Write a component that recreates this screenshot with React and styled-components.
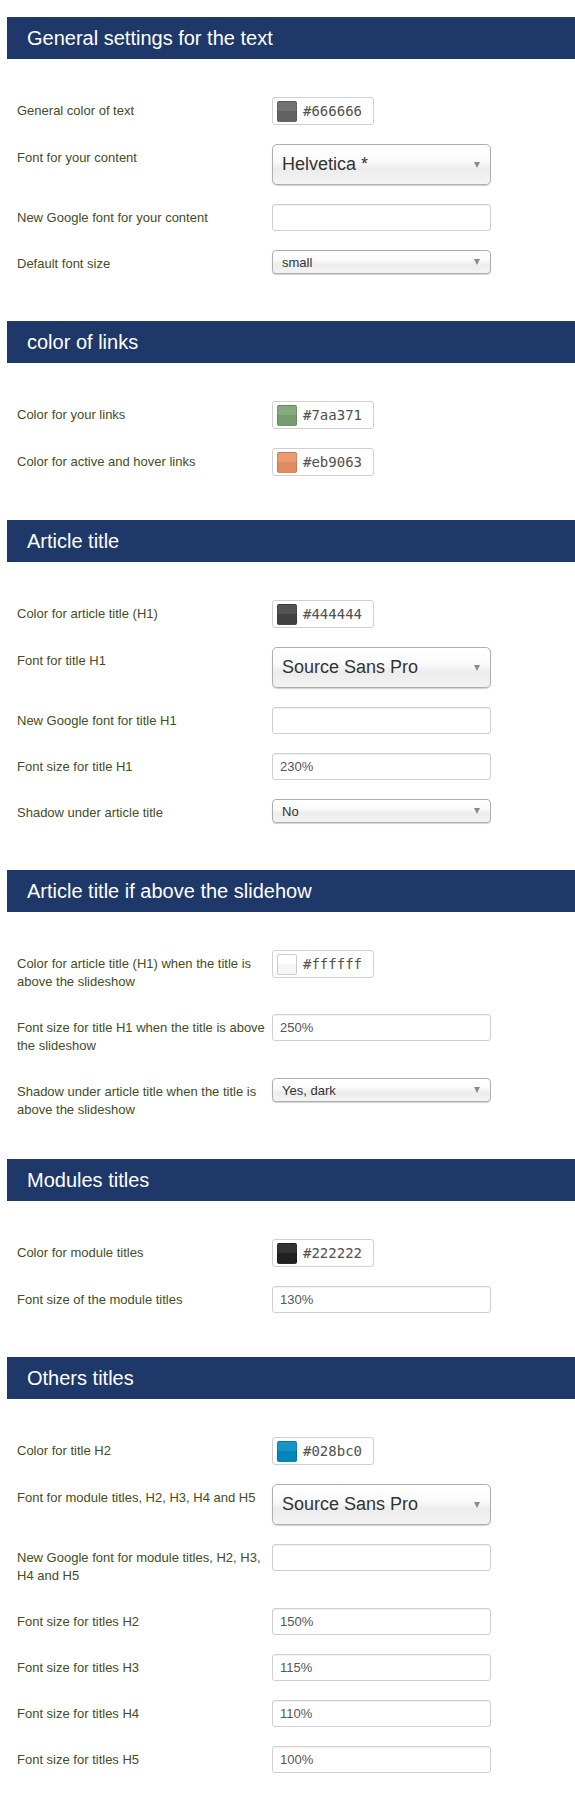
import styled, { createGlobalStyle } from 'styled-components';

const sections = [
  {
    title: 'General settings for the text',
    fields: [
      { label: 'General color of text', type: 'color', value: '#666666' },
      { label: 'Font for your content', type: 'font', value: 'Helvetica *' },
      { label: 'New Google font for your content', type: 'text', value: '' },
      { label: 'Default font size', type: 'select', value: 'small' },
    ],
  },
  {
    title: 'color of links',
    fields: [
      { label: 'Color for your links', type: 'color', value: '#7aa371' },
      { label: 'Color for active and hover links', type: 'color', value: '#eb9063' },
    ],
  },
  {
    title: 'Article title',
    fields: [
      { label: 'Color for article title (H1)', type: 'color', value: '#444444' },
      { label: 'Font for title H1', type: 'font', value: 'Source Sans Pro' },
      { label: 'New Google font for title H1', type: 'text', value: '' },
      { label: 'Font size for title H1', type: 'text', value: '230%' },
      { label: 'Shadow under article title', type: 'select', value: 'No' },
    ],
  },
  {
    title: 'Article title if above the slidehow',
    tight: true,
    fields: [
      {
        label: 'Color for article title (H1) when the title is above the slideshow',
        type: 'color',
        value: '#ffffff',
      },
      {
        label: 'Font size for title H1 when the title is above the slideshow',
        type: 'text',
        value: '250%',
      },
      {
        label: 'Shadow under article title when the title is above the slideshow',
        type: 'select',
        value: 'Yes, dark',
      },
    ],
  },
  {
    title: 'Modules titles',
    fields: [
      { label: 'Color for module titles', type: 'color', value: '#222222' },
      { label: 'Font size of the module titles', type: 'text', value: '130%' },
    ],
  },
  {
    title: 'Others titles',
    fields: [
      { label: 'Color for title H2', type: 'color', value: '#028bc0' },
      { label: 'Font for module titles, H2, H3, H4 and H5', type: 'font', value: 'Source Sans Pro' },
      { label: 'New Google font for module titles, H2, H3, H4 and H5', type: 'text', value: '' },
      { label: 'Font size for titles H2', type: 'text', value: '150%' },
      { label: 'Font size for titles H3', type: 'text', value: '115%' },
      { label: 'Font size for titles H4', type: 'text', value: '110%' },
      { label: 'Font size for titles H5', type: 'text', value: '100%' },
    ],
  },
];

export default function App() {
  return (
    <>
      <GlobalStyle />
      <Page>
        {sections.map((section) => (
          <section key={section.title}>
            <Header>{section.title}</Header>
            <Fields $tight={section.tight}>
              {section.fields.map((field) => (
                <Row key={field.label}>
                  <Label>{field.label}</Label>
                  {renderControl(field)}
                </Row>
              ))}
            </Fields>
          </section>
        ))}
      </Page>
    </>
  );

  function renderControl(field) {
    if (field.type === 'color') {
      return (
        <ColorBox>
          <Swatch $color={field.value} />
          <HexText>{field.value}</HexText>
        </ColorBox>
      );
    }
    if (field.type === 'font' || field.type === 'select') {
      const large = field.type === 'font';
      return (
        <Select $large={large}>
          <span>{field.value}</span>
          <Caret />
        </Select>
      );
    }
    return <TextInput type="text" defaultValue={field.value} readOnly />;
  }
}

const GlobalStyle = createGlobalStyle`
  html, body {
    margin: 0;
    padding: 0;
    background: #ffffff;
  }
  body {
    font-family: "Liberation Sans", Helvetica, Arial, sans-serif;
  }
`;

const Page = styled.div`
  padding: 17px 0 0 7px;
`;

const Header = styled.h2`
  margin: 0;
  height: 42px;
  display: flex;
  align-items: center;
  padding-left: 20px;
  background-color: #1d3869;
  color: #ffffff;
  font-size: 20px;
  font-weight: normal;
`;

const Fields = styled.div`
  padding: 38px 0 ${(p) => (p.$tight ? '17px' : '25px')} 10px;
`;

const Row = styled.div`
  display: flex;
  align-items: flex-start;
  margin-bottom: 19px;
`;

const Label = styled.label`
  width: 255px;
  flex-shrink: 0;
  padding: 5px 0 4px;
  font-size: 13px;
  line-height: 18px;
  color: #434d26;
`;

const ColorBox = styled.div`
  box-sizing: border-box;
  width: 102px;
  height: 28px;
  display: flex;
  align-items: center;
  padding: 0 4px;
  border: 1px solid #d0d0d0;
  border-radius: 3px;
  background: #ffffff;
`;

const Swatch = styled.span`
  width: 20px;
  height: 21px;
  border-radius: 2px;
  box-sizing: border-box;
  border: 1px solid ${(p) => (p.$color === '#ffffff' ? '#cccccc' : 'rgba(0, 0, 0, 0.12)')};
  background: linear-gradient(
      to bottom,
      rgba(255, 255, 255, 0.08) 0%,
      rgba(255, 255, 255, 0.08) 45%,
      rgba(0, 0, 0, 0.04) 50%,
      rgba(0, 0, 0, 0.04) 100%
    ),
    ${(p) => p.$color};
`;

const HexText = styled.span`
  margin-left: 6px;
  font-family: "DejaVu Sans Mono", "Liberation Mono", monospace;
  font-size: 14px;
  color: #505050;
`;

const Select = styled.div`
  box-sizing: border-box;
  width: 219px;
  height: ${(p) => (p.$large ? '41px' : '24px')};
  display: flex;
  align-items: center;
  justify-content: space-between;
  padding: 0 10px 0 9px;
  border: 1px solid #aeaeae;
  border-radius: ${(p) => (p.$large ? '5px' : '4px')};
  background: linear-gradient(
    to bottom,
    #ffffff 0%,
    #fbfbfb 40%,
    #ececec 62%,
    #f3f3f3 100%
  );
  box-shadow: 0 1px 1px rgba(0, 0, 0, 0.18);
  font-size: ${(p) => (p.$large ? '18px' : '13px')};
  color: #333333;
`;

const Caret = styled.span`
  width: 0;
  height: 0;
  border-left: 3.5px solid transparent;
  border-right: 3.5px solid transparent;
  border-top: 6px solid #8a8a8a;
`;

const TextInput = styled.input`
  box-sizing: border-box;
  width: 219px;
  height: 27px;
  margin: 0;
  padding: 0 7px;
  border: 1px solid #cfcfcf;
  border-radius: 3px;
  box-shadow: inset 0 1px 1px rgba(0, 0, 0, 0.06);
  font-family: "Liberation Sans", Helvetica, Arial, sans-serif;
  font-size: 13px;
  color: #555555;
  background: #ffffff;
  outline: none;
`;
